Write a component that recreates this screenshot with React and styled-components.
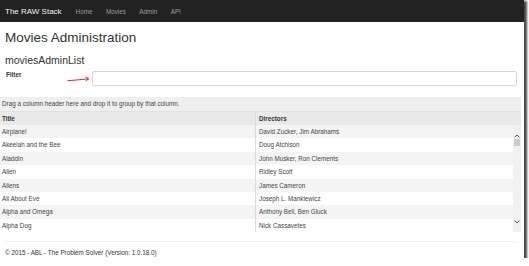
import React from 'react';
import styled, { createGlobalStyle } from 'styled-components';

const GlobalStyle = createGlobalStyle`
  html, body {
    margin: 0;
    padding: 0;
    background: #fff;
  }
  body {
    font-family: "Liberation Sans", Arial, sans-serif;
    color: #333;
  }
`;

const Window = styled.div`
  width: 524px;
  height: 258px;
  overflow: hidden;
  background: #fff;
  box-shadow: 2px 2px 2px 1px rgba(0, 0, 0, 0.72);
  display: flex;
  flex-direction: column;
`;

const NavBar = styled.nav`
  height: 22px;
  flex: none;
  background: #222;
  display: flex;
  align-items: center;
  padding-left: 5px;
`;

const Brand = styled.span`
  font-size: 8px;
  color: #f2f2f2;
  margin-right: 14px;
`;

const NavLink = styled.a`
  font-size: 6.3px;
  color: #9d9d9d;
  margin-right: 13.5px;
  text-decoration: none;
`;

const Content = styled.div`
  padding: 0 7px 0 5px;
`;

const Title = styled.h1`
  margin: 8px 0 0;
  font-size: 13.5px;
  line-height: 16px;
  font-weight: normal;
  color: #333;
`;

const SubTitle = styled.h2`
  margin: 8px 0 0;
  font-size: 10.5px;
  line-height: 13px;
  font-weight: normal;
  color: #333;
`;

const FilterRow = styled.div`
  margin-top: 4px;
  display: flex;
  align-items: flex-start;
`;

const LabelCell = styled.div`
  width: 87px;
  display: flex;
  align-items: flex-start;
`;

const Label = styled.label`
  margin-left: 1px;
  font-size: 6.3px;
  line-height: 8px;
  font-weight: bold;
  color: #333;
`;

const Arrow = styled.svg`
  margin: 5px 2px 0 auto;
`;

const FilterInput = styled.input`
  flex: 1;
  height: 15px;
  box-sizing: border-box;
  border: 1px solid #d6d6d6;
  border-radius: 2px;
  padding: 0 4px;
  font: inherit;
  font-size: 6.3px;
`;

const Grid = styled.div`
  margin-top: 11px;
  width: 521px;
  background: #f1f1f1;
  font-size: 6.3px;
  color: #444;
`;

const GroupBand = styled.div`
  height: 14px;
  line-height: 14px;
  padding-left: 2px;
  color: #444;
  background: #efefef;
`;

const HeaderRow = styled.div`
  height: 13px;
  display: flex;
  background: #e9e9e9;
  border-top: 1px solid #e2e2e2;
  font-weight: bold;
  color: #333;
`;

const Cell = styled.div`
  width: ${(p) => p.w}px;
  flex: none;
  box-sizing: border-box;
  padding-left: ${(p) => (p.first ? 2 : 3)}px;
  border-left: ${(p) => (p.first ? 'none' : '1px solid #dcdcdc')};
  line-height: ${(p) => p.h}px;
  white-space: nowrap;
  overflow: hidden;
`;

const Body = styled.div`
  display: flex;
`;

const Rows = styled.div`
  width: 513px;
`;

const Row = styled.div`
  height: 13.375px;
  display: flex;
  background: ${(p) => (p.odd ? '#f4f4f4' : '#fff')};
`;

const ScrollBar = styled.div`
  width: 8px;
  display: flex;
  flex-direction: column;
  align-items: center;
  background: #f1f1f1;
`;

const Thumb = styled.div`
  width: 6px;
  height: 7px;
  margin-top: 1px;
  background: #cdcdcd;
`;

const Spacer = styled.div`
  flex: 1;
`;

const Footer = styled.footer`
  margin: 9px 7px 0 5px;
  border-top: 1px solid #eee;
  padding-top: 6px;
  font-size: 6.3px;
  line-height: 10px;
  color: #333;
`;

const Chevron = ({ up }) => (
  <svg width="6" height="4" viewBox="0 0 6 4" style={{ marginTop: up ? 9 : 0, marginBottom: up ? 0 : 8 }}>
    <path d={up ? 'M0.6 3.4 L3 1 L5.4 3.4' : 'M0.6 0.6 L3 3 L5.4 0.6'} fill="none" stroke="#555" strokeWidth="1" />
  </svg>
);

const movies = [
  ['Airplane!', 'David Zucker, Jim Abrahams'],
  ['Akeelah and the Bee', 'Doug Atchison'],
  ['Aladdin', 'John Musker, Ron Clements'],
  ['Alien', 'Ridley Scott'],
  ['Aliens', 'James Cameron'],
  ['All About Eve', 'Joseph L. Mankiewicz'],
  ['Alpha and Omega', 'Anthony Bell, Ben Gluck'],
  ['Alpha Dog', 'Nick Cassavetes'],
];

export default function App() {
  return (
    <>
      <GlobalStyle />
      <Window>
        <NavBar>
          <Brand>The RAW Stack</Brand>
          <NavLink>Home</NavLink>
          <NavLink>Movies</NavLink>
          <NavLink>Admin</NavLink>
          <NavLink>API</NavLink>
        </NavBar>
        <Content>
          <Title>Movies Administration</Title>
          <SubTitle>moviesAdminList</SubTitle>
          <FilterRow>
            <LabelCell>
              <Label>Filter</Label>
              <Arrow width="23" height="6" viewBox="0 0 23 6">
                <path d="M0.5 4.6 C6 4.4 14 3.6 21.5 2.8" fill="none" stroke="#e0281e" strokeWidth="1" />
                <path d="M18.5 0.8 L21.8 2.8 L18.8 4.8" fill="none" stroke="#e0281e" strokeWidth="1" />
              </Arrow>
            </LabelCell>
            <FilterInput />
          </FilterRow>
        </Content>
        <Grid>
          <GroupBand>Drag a column header here and drop it to group by that column.</GroupBand>
          <HeaderRow>
            <Cell first w={255} h={13}>Title</Cell>
            <Cell w={266} h={13}>Directors</Cell>
          </HeaderRow>
          <Body>
            <Rows>
              {movies.map(([title, directors], i) => (
                <Row key={title} odd={i % 2 === 0}>
                  <Cell first w={255} h={13.375}>{title}</Cell>
                  <Cell w={258} h={13.375}>{directors}</Cell>
                </Row>
              ))}
            </Rows>
            <ScrollBar>
              <Chevron up />
              <Thumb />
              <Spacer />
              <Chevron />
            </ScrollBar>
          </Body>
        </Grid>
        <Footer>© 2015 - ABL - The Problem Solver (Version: 1.0.18.0)</Footer>
      </Window>
    </>
  );
}
